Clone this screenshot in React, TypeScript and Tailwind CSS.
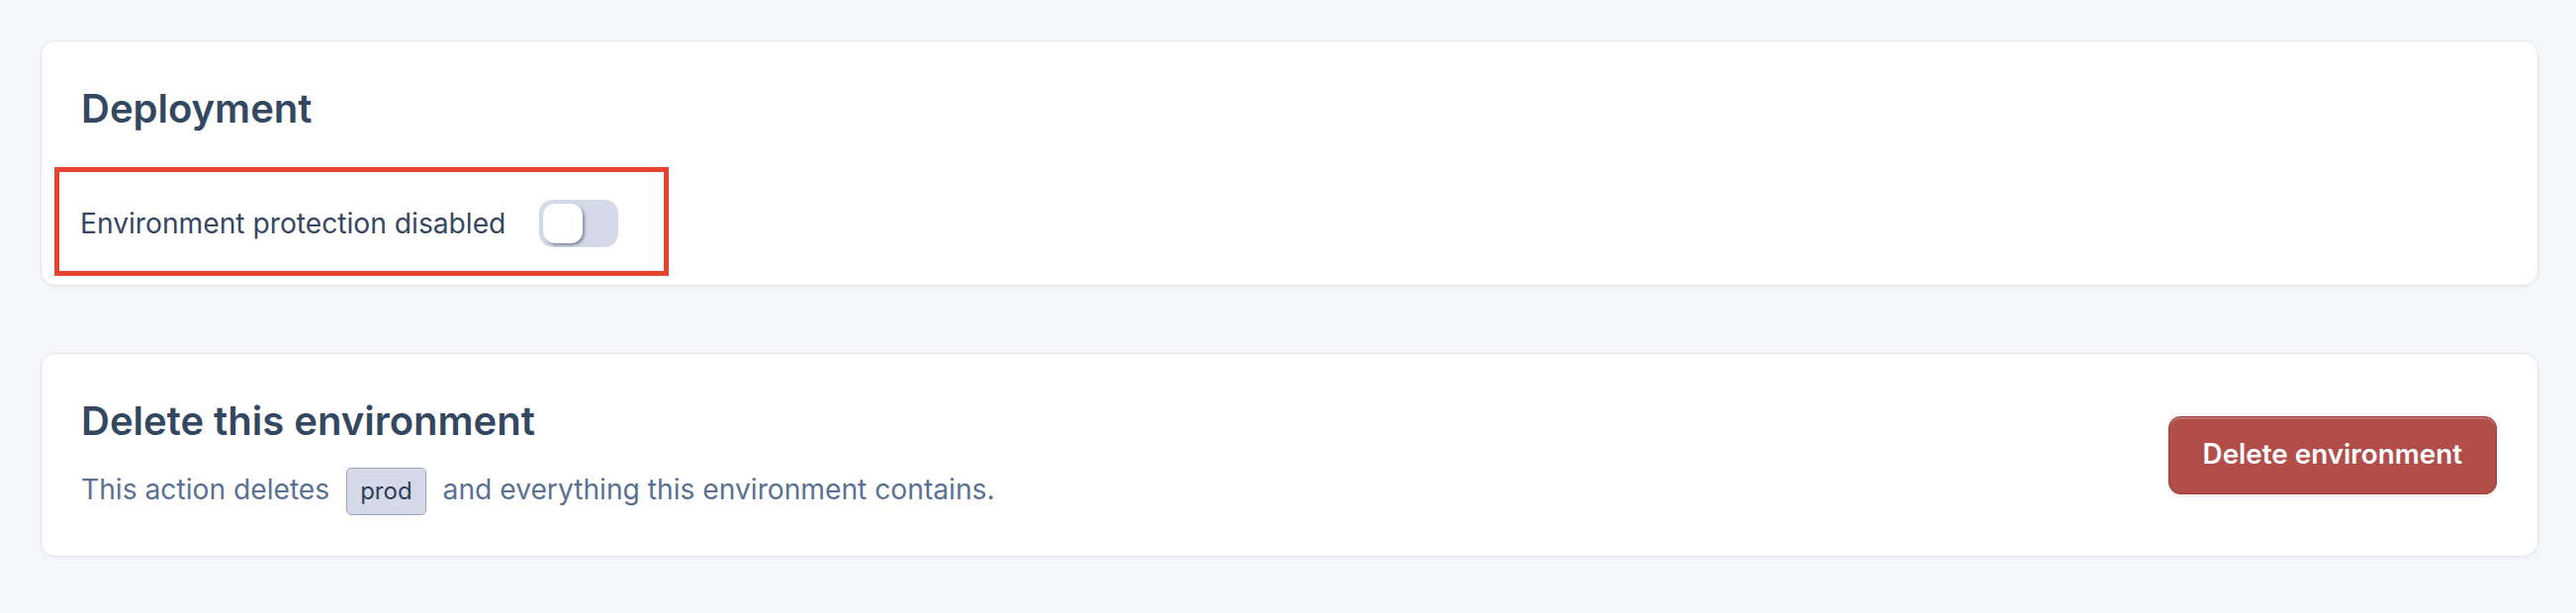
import React, { useState } from 'react';

function Toggle({ on, onChange }: { on: boolean; onChange: (v: boolean) => void }) {
  return (
    <button
      type="button"
      role="switch"
      aria-checked={on}
      onClick={() => onChange(!on)}
      className={`flex w-[80px] h-[48px] rounded-[14px] p-[4px] ${on ? 'bg-[#4f6fa8] justify-end' : 'bg-[#d4dae8] justify-start'}`}
    >
      <span className="block w-[40px] h-[40px] rounded-[12px] bg-white shadow-[2px_2px_3px_rgba(40,45,60,0.45)]" />
    </button>
  );
}

export default function App() {
  const [protectedEnv, setProtectedEnv] = useState(false);
  const envName = 'prod';

  return (
    <div className="min-h-[620px] bg-[#f5f6f9] pt-[41px] pl-[41px] pr-[38px] font-['Inter','Noto_Sans',sans-serif]">
      <section className="bg-white rounded-[15px] border border-[#e6e8ee] shadow-[0_1px_3px_rgba(20,30,50,0.06)] pt-[44px] pb-[9px] px-[40px]">
        <h2 className="text-[40px] leading-[48px] font-semibold text-[#344760]">Deployment</h2>
        <div className="mt-[35px] -ml-[27px] w-fit flex items-center gap-[34px] border-[5px] border-[#e5432b] pt-[28px] pb-[24px] pl-[21px] pr-[46px]">
          <span className="text-[28.2px] leading-[48px] text-[#354761]">
            Environment protection {protectedEnv ? 'enabled' : 'disabled'}
          </span>
          <Toggle on={protectedEnv} onChange={setProtectedEnv} />
        </div>
      </section>

      <section className="mt-[68px] bg-white rounded-[15px] border border-[#e6e8ee] shadow-[0_1px_3px_rgba(20,30,50,0.06)] pl-[40px] pr-[41px] flex items-center justify-between">
        <div className="pt-[44px] pb-[41px]">
          <h2 className="text-[40px] leading-[48px] font-semibold text-[#344760]">Delete this environment</h2>
          <p className="mt-[21px] text-[28.2px] leading-[48px] text-[#5b7193]">
            This action deletes
            <span className="inline-block mx-[17px] px-[13px] border border-[#9ba6bd] bg-[#d4dae8] rounded-[5px] text-[24px] leading-[46px] text-[#2f3e55]">
              {envName}
            </span>
            and everything this environment contains.
          </p>
        </div>
        <button
          type="button"
          className="h-[79px] px-[34px] rounded-[12px] bg-[#b14e4a] border border-[#9c3f3b] text-white text-[27.8px] font-semibold shadow-[inset_0_2px_0_rgba(255,255,255,0.22),0_2px_5px_rgba(0,0,0,0.08)]"
        >
          Delete environment
        </button>
      </section>
    </div>
  );
}
